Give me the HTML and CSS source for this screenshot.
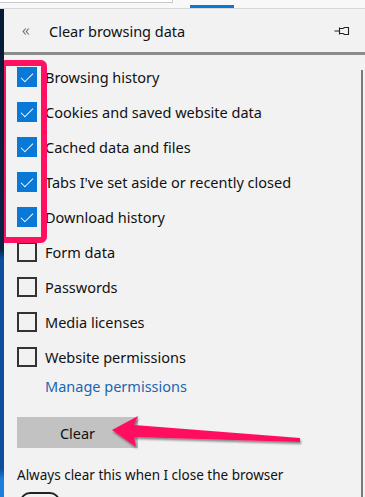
FILE: index.html
```html
<!DOCTYPE html>
<html>
<head>
<meta charset="utf-8">
<link rel="stylesheet" href="styles.css">
</head>
<body>
<div class="topbar">
  <div class="urlbox"></div>
  <div class="tabline"></div>
</div>
<div class="main">
  <div class="backdrop"></div>
  <div class="panel">
    <div class="header">
      <span class="back">«</span>
      <span class="title">Clear browsing data</span>
      <svg class="pin" width="16" height="10" viewBox="0 0 16 10"><path d="M0.5 5H5.5M5.5 1.5V8.5M5.5 2.5H9L10.5 1.5H14.5V8.5H10.5L9 7.5H5.5" fill="none" stroke="#222" stroke-width="1.1"/></svg>
    </div>
    <div class="content">
      <ul class="list">
        <li class="row"><span class="box checked"></span>Browsing history</li>
        <li class="row"><span class="box checked"></span>Cookies and saved website data</li>
        <li class="row"><span class="box checked"></span>Cached data and files</li>
        <li class="row"><span class="box checked"></span>Tabs I've set aside or recently closed</li>
        <li class="row"><span class="box checked"></span>Download history</li>
        <li class="row"><span class="box"></span>Form data</li>
        <li class="row"><span class="box"></span>Passwords</li>
        <li class="row"><span class="box"></span>Media licenses</li>
        <li class="row"><span class="box"></span>Website permissions</li>
      </ul>
      <a class="link">Manage permissions</a>
      <button class="clear">Clear</button>
      <p class="always">Always clear this when I close the browser</p>
      <div class="toggle"></div>
      <div class="scrollthumb"></div>
      <div class="highlight"></div>
      <svg class="arrow" width="200" height="40" viewBox="0 0 200 40">
        <defs>
          <filter id="sh" x="-10%" y="-30%" width="120%" height="160%">
            <feDropShadow dx="1" dy="2" stdDeviation="1.2" flood-color="#000" flood-opacity="0.45"/>
          </filter>
        </defs>
        <path d="M2 14 L28 0 L24 9 L190 22 L190 26 L24 21 L26 31 Z" fill="#ff1060" filter="url(#sh)"/>
      </svg>
    </div>
  </div>
</div>
</body>
</html>
```
FILE: styles.css
```css
* { box-sizing: border-box; }
html, body {
  margin: 0;
  padding: 0;
}
body {
  width: 365px;
  height: 497px;
  overflow: hidden;
  background: #f2f2f2;
  font-family: "Noto Sans", "Open Sans", sans-serif;
  color: #111;
}
.topbar {
  height: 9px;
  background: #f8f8f8;
  border-bottom: 1px solid #d6d6d6;
  position: relative;
}
.urlbox {
  width: 173px;
  height: 3px;
  background: #fff;
  border-right: 1px solid #c8c8c8;
  border-bottom: 1px solid #c8c8c8;
}
.tabline {
  position: absolute;
  left: 190px;
  top: 5px;
  width: 44px;
  height: 3px;
  background: #0a78d7;
}
.main {
  display: flex;
  height: 488px;
}
.backdrop {
  width: 4px;
  flex: none;
  background: linear-gradient(#061a33 0, #0a2444 240px, #0c4e9c 250px, #0c4e9c 460px, #1b7ed8 470px);
}
.panel {
  flex: 1;
  display: flex;
  flex-direction: column;
  background: #f2f2f2;
  overflow: hidden;
}
.header {
  flex: none;
  height: 46px;
  display: flex;
  align-items: center;
  padding-left: 18px;
  padding-right: 15px;
  border-bottom: 3px solid #8c8c8c;
}
.back {
  font-size: 17px;
  font-weight: 300;
  color: #444;
  width: 27px;
  line-height: 1;
  margin-top: -2px;
}
.title {
  font-size: 14.5px;
  flex: 1;
}
.pin { display: block; }
.content {
  position: relative;
  flex: none;
  padding-top: 4px;
}
.list {
  list-style: none;
  margin: 0;
  padding: 0;
}
.row {
  height: 35px;
  display: flex;
  align-items: center;
  padding-left: 13px;
  font-size: 14.5px;
  gap: 8px;
  white-space: nowrap;
}
.box {
  width: 20px;
  height: 20px;
  border: 2px solid #333;
  flex: none;
  position: relative;
}
.box.checked {
  background: #0a78d7;
  border-color: #0a78d7;
}
.box.checked::after {
  content: "";
  position: absolute;
  left: 2px;
  top: 0px;
  width: 11px;
  height: 5px;
  border-left: 1.3px solid #fff;
  border-bottom: 1.3px solid #fff;
  transform: translate(0, 4px) rotate(-45deg);
}
.link {
  display: block;
  height: 25px;
  line-height: 25px;
  padding-left: 41px;
  font-size: 14.5px;
  color: #1a66b0;
}
.clear {
  display: block;
  margin: 18px 0 0 13px;
  width: 121px;
  height: 31px;
  border: none;
  background: #c2c2c2;
  font-family: inherit;
  font-size: 14.5px;
  color: #111;
  padding: 0;
}
.always {
  margin: 18px 0 0 13px;
  font-size: 13.5px;
  line-height: 18px;
}
.toggle {
  margin: 8px 0 0 16px;
  width: 40px;
  height: 20px;
  border: 2px solid #222;
  border-radius: 10px;
}
.scrollthumb {
  position: absolute;
  right: 2px;
  top: 15px;
  bottom: 0;
  width: 2px;
  background: #7a7a7a;
}
.highlight {
  position: absolute;
  left: -4px;
  top: 5px;
  width: 47px;
  height: 183px;
  border: 6px solid #ff1060;
  border-radius: 6px;
}
.arrow {
  position: absolute;
  left: 106px;
  top: 361px;
}
```
